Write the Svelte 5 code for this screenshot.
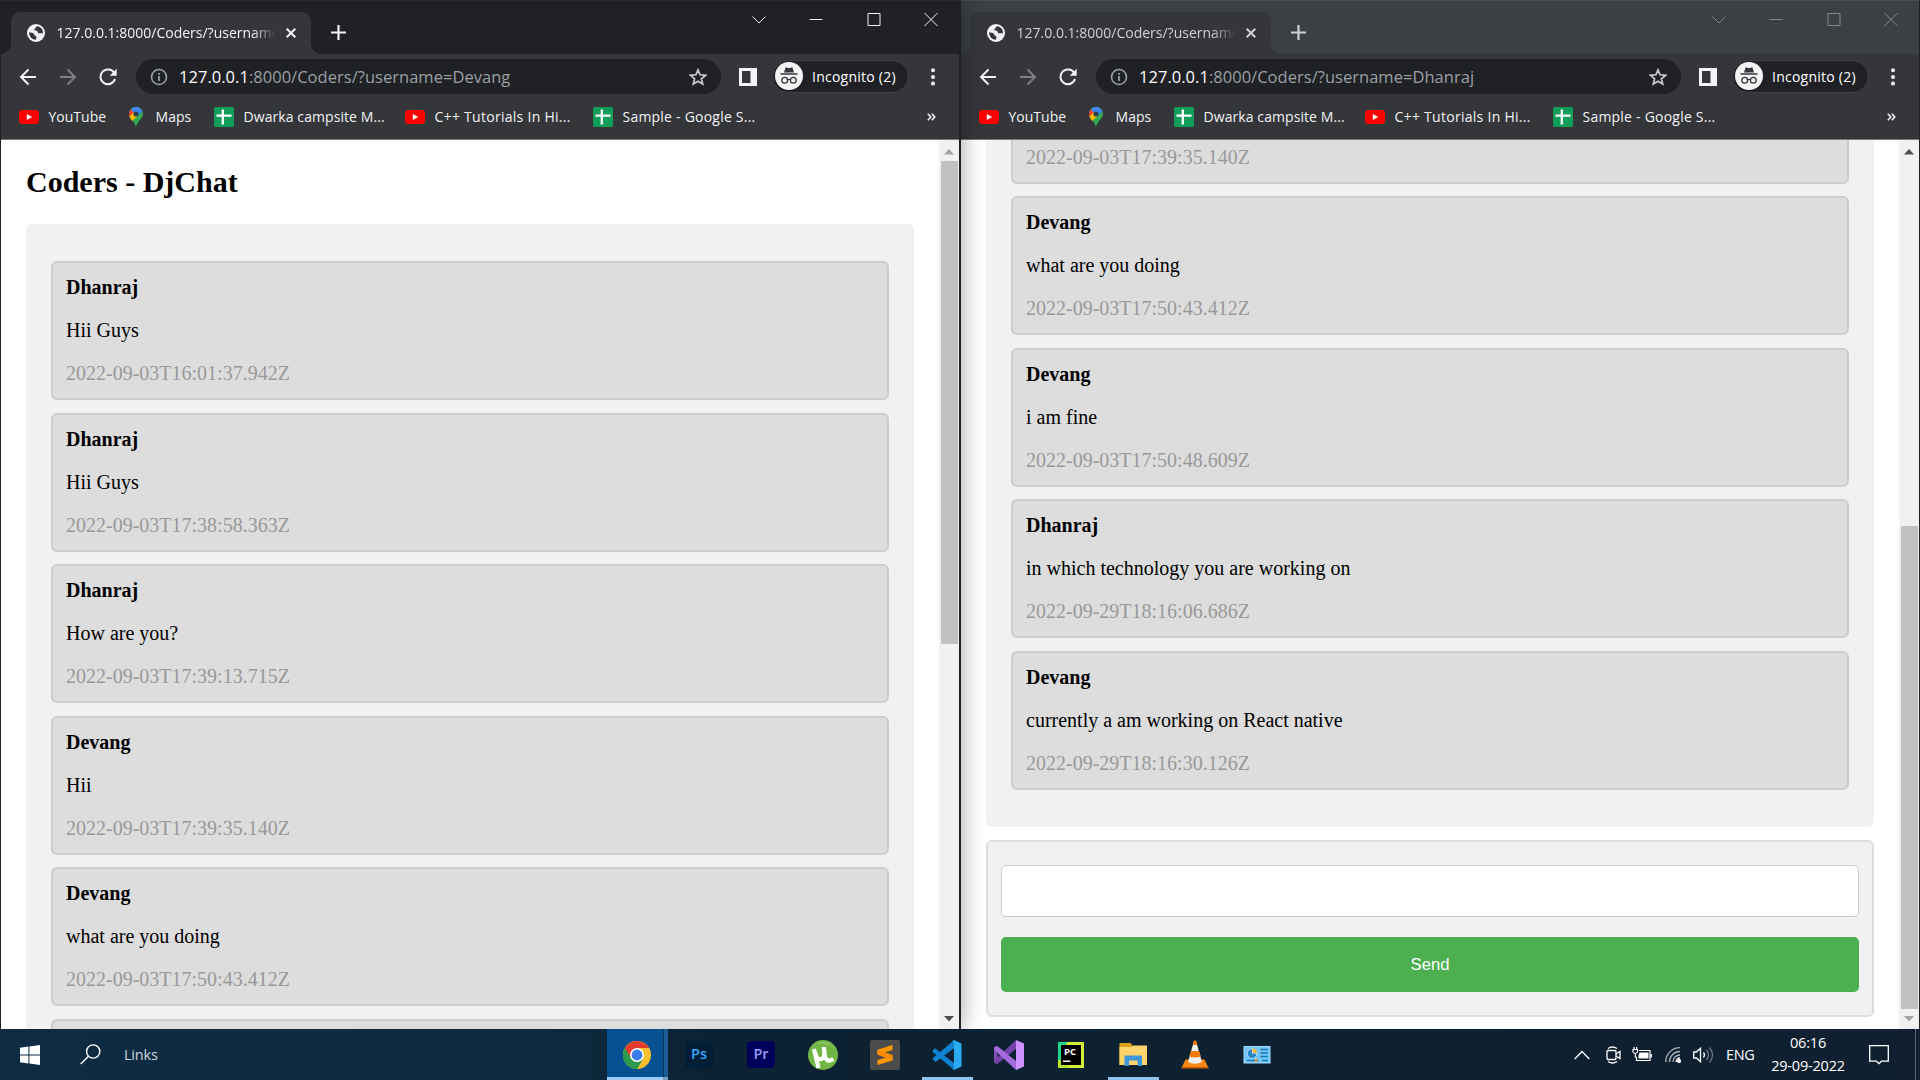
<script>
  const messages = [
    ['Dhanraj', 'Hii Guys', '2022-09-03T16:01:37.942Z'],
    ['Dhanraj', 'Hii Guys', '2022-09-03T17:38:58.363Z'],
    ['Dhanraj', 'How are you?', '2022-09-03T17:39:13.715Z'],
    ['Devang', 'Hii', '2022-09-03T17:39:35.140Z'],
    ['Devang', 'what are you doing', '2022-09-03T17:50:43.412Z'],
    ['Devang', 'i am fine', '2022-09-03T17:50:48.609Z'],
    ['Dhanraj', 'in which technology you are working on', '2022-09-29T18:16:06.686Z'],
    ['Devang', 'currently a am working on React native', '2022-09-29T18:16:30.126Z'],
  ];
  // icon, label, tracking in px
  const bookmarks = [
    ['yt', 'YouTube', 0],
    ['maps', 'Maps', 0.05],
    ['sheet', 'Dwarka campsite M...', 0.08],
    ['yt', 'C++ Tutorials In Hi...', 0.28],
    ['sheet', 'Sample - Google S...', 0.22],
  ];
  // The first window is scrolled to the top of the chat, the second to its end.
  const windows = [
    { user: 'Devang', active: true, visible: messages.slice(0, 6) },
    { user: 'Dhanraj', active: false, visible: messages.slice(3) },
  ];
  const apps = ['chrome', 'ps', 'pr', 'utorrent', 'sublime', 'vscode', 'vs', 'pycharm', 'folder', 'vlc', 'panel'];
  const running = ['vscode', 'folder'];
</script>

{#snippet bookmarkIcon(kind)}
  {#if kind === 'yt'}
    <svg width="20" height="20" viewBox="0 0 20 20"><rect y="3" width="20" height="14" rx="3.4" fill="#f00" /><path d="M7.8 7v6l5.4-3z" fill="#fff" /></svg>
  {:else if kind === 'maps'}
    <svg width="14" height="20" viewBox="0 0 14 20">
      <path d="M7 0a7 7 0 0 1 7 7c0 5-5.500 6.500-7 13-1.500-6.500-7-8-7-13a7 7 0 0 1 7-7z" fill="#34a853" />
      <path d="M1.600 2.500A7 7 0 0 1 13.500 4.500L7 9z" fill="#4285f4" />
      <path d="M1.700 2.400 5 5.500 1.500 11Q0 9 0 7c0-2 .7-3.400 1.700-4.600z" fill="#ea4335" />
      <path d="M9 8.500 3.300 14Q.8 11 .6 9.500L5 5z" fill="#fbbc04" />
      <circle cx="7" cy="7" r="2.500" fill="#303b58" />
    </svg>
  {:else}
    <svg width="20" height="20" viewBox="0 0 20 20"><rect width="20" height="20" rx="1.500" fill="#109d59" /><path d="M8.800 2.500v15M2.500 8.700h15" stroke="#fff" stroke-width="2.300" /></svg>
  {/if}
{/snippet}

{#snippet appIcon(name)}
  <svg width="30" height="30" viewBox="0 0 30 30">
    {#if name === 'chrome'}
      <circle cx="15" cy="15" r="14" fill="#fbc02d" />
      <path d="M15 15 2.900 8A14 14 0 0 0 15 29l6-10.500z" fill="#2b9b4b" />
      <path d="M15 15 2.900 8A14 14 0 0 1 27.100 8H15z" fill="#e33b2e" />
      <path d="M2.900 8 9 18.500 15 15 12 8z" fill="#e33b2e" />
      <path d="M2.900 8A14 14 0 0 0 15 29l5-8.500-11-2z" fill="#2b9b4b" />
      <circle cx="15" cy="15" r="7" fill="#fff" /><circle cx="15" cy="15" r="5.400" fill="#3b7ded" />
    {:else if name === 'ps'}
      <rect x="1" y="1" width="28" height="27" rx="4.500" fill="#001e36" /><text x="15" y="18.700" fill="#31a8ff">Ps</text>
    {:else if name === 'pr'}
      <rect x="1" y="1" width="28" height="27" rx="4.500" fill="#00005b" /><text x="15" y="18.700" fill="#9999ff">Pr</text>
    {:else if name === 'utorrent'}
      <circle cx="15" cy="15" r="15" fill="#71b544" />
      <path d="M2.500 7Q14-1 27 8 20 2 15 2T2.500 7z" fill="#9ccf73" />
      <path d="M6 9 10.500 28M7.500 13c1 8 8.500 9 9-1l-.8-5M16.500 14c1 7 4 8 9 5" fill="none" stroke="#fff" stroke-width="4.200" />
    {:else if name === 'sublime'}
      <rect width="30" height="30" rx="2" fill="#4b4b4b" />
      <path d="M7.500 9.700 22.500 5v5l-8.800 2.700 8.800 2.800v5L7.500 25v-5l8.800-2.600-8.800-2.900z" fill="#ff9800" /><path d="m7.500 9.700 15 5.300v5.300l-15-5.600z" fill="#f78c00" />
    {:else if name === 'vscode'}
      <path d="M.8 10.500 3 8.600l4.300 3.200L22 26v3.500L.8 12z" fill="#0a7dcb" />
      <path d="M22 .3v8L3.600 22 .8 19.800v-1.600z" fill="#0f83cf" />
      <path d="m22 0 7.500 3.500v23L22 30l-1.500-1 1.500-2V3l-1.500-2z" fill="#29aaf2" />
      <path d="M.8 10.500 3 8.600 22 23v6.700L.8 11.800z" fill="#0f83cf" />
    {:else if name === 'vs'}
      <path d="M0 7.500 3 6l7 5.500v7L3 24l-3-1.500z" fill="#8050b5" /><path d="M3.500 10.500v9L8 15z" fill="#0d2232" />
      <path d="M3 24 22 9V0L0 20.500v2z" fill="#7443a8" />
      <path d="m3 6 19 15v9L0 9.500v-2z" fill="#a56bdd" />
      <path d="m22 0 8 3.500v23L22 30z" fill="#cf91ff" />
    {:else if name === 'pycharm'}
      <path d="M2 2h26v26H2z" fill="#d6ed36" /><path d="M2 2h9L5 28H2z" fill="#20d789" /><path d="M2 20h10v8H2z" fill="#b8e62c" />
      <rect x="5" y="5" width="20" height="20" /><text x="14" y="15" fill="#fff" class="pc">PC</text><path d="M7 21.200h7.500" stroke="#fff" stroke-width="1.500" />
    {:else if name === 'folder'}
      <path d="M1.500 3h11l2.500 3h13.500v19h-27z" fill="#dba11d" /><path d="M1.500 7h12l2-1.500h13.500V25h-27.500z" fill="#ffd56b" />
      <path d="M6.500 26V15.500h17.500V26h-4.500v-5.500h-8.500V26z" fill="#3f97db" />
    {:else if name === 'vlc'}
      <path d="M5.500 19.500h19l4 8.500h-27z" fill="#f68712" /><path d="M14 1h2l6 21q-7 3.500-14 0z" fill="#eef0f0" />
      <path d="m13.500 2 .5-1.500h2L17.500 5h-5zM10.800 11h8.400l1.600 5.500q-5.800 2-11.600 0z" fill="#f27a0b" /><path d="M1.500 27h27v1.500h-27z" fill="#cf5c08" />
    {:else}
      <rect x="1.500" y="6" width="27" height="17.500" fill="#a4ddfa" /><rect x="2.500" y="7" width="25" height="15.500" fill="#73c5f4" />
      <circle cx="10" cy="13.500" r="5" fill="#eaf6fd" /><path d="M10 13.500v-4.500a4.500 4.500 0 1 0 4.500 4.500z" fill="#2a86c8" /><path d="M10.500 13V8.500A4.500 4.500 0 0 1 15 13z" fill="#f2b43f" />
      <path d="M18.500 9.500H26M18.500 13H26M18.500 16.500H26M5 20.500h11M20 20.500h6" stroke="#157ab8" stroke-width="1.300" /><path d="M14 19v3" stroke="#f39c1f" stroke-width="2" />
    {/if}
  </svg>
{/snippet}

<div class="desktop">
  <div class="screens">
    {#each windows as win}
      <section class="window" class:inactive={!win.active}>
        <header class="titlebar">
          <div class="tab">
            <svg width="18" height="18" viewBox="0 0 18 18"><circle cx="9" cy="9" r="9" fill="#f1f3f4" /><path d="M2 8.600c2.200 0 3.800.2 4.800 1.200.7.800.4 2 1.700 2.100 1 .1 1 .8.900 1.700l-.3 2.200A6.900 6.900 0 0 1 2 8.600zM10.700 2.300c-1 .3-2 .7-2 1.600 0 1-1.700.6-1.700 1.800 0 1 1.900.4 2.900 1 1.200.7.300 2.200 1.800 2.500 1.400.3 2.600-.3 4.200.2A6.900 6.900 0 0 0 10.700 2.300z" fill="#35363a" /></svg>
            <span class="tab-title">127.0.0.1:8000/Coders/?username</span>
            <svg class="tab-close" width="10" height="10" viewBox="0 0 10 10"><path d="m.7.7 8.600 8.600m0-8.600L.7 9.300" stroke="currentColor" stroke-width="2" /></svg>
          </div>
          <svg class="new-tab" width="15" height="15" viewBox="0 0 15 15"><path d="M7.500 0v15M0 7.500h15" stroke="currentColor" stroke-width="2.200" /></svg>
          <div class="controls">
            <svg width="14" height="14" viewBox="0 0 14 14"><path d="m.5 4.500 6.500 6.500L13.500 4.500" /></svg>
            <svg width="14" height="14" viewBox="0 0 14 14"><path d="M.5 7.500h13" /></svg>
            <svg width="14" height="14" viewBox="0 0 14 14"><path d="M1 1.500h12v12H1z" /></svg>
            <svg width="14" height="14" viewBox="0 0 14 14"><path d="m.5 1 13 13m0-13-13 13" /></svg>
          </div>
        </header>
        <div class="toolbar">
          <svg class="nav" width="18" height="18" viewBox="0 0 18 18"><path d="M17 9H2m7.500-7.500L2 9l7.500 7.500" stroke="#f1f3f4" /></svg>
          <svg class="nav" width="18" height="18" viewBox="0 0 18 18"><path d="M1 9h15M8.500 1.500 16 9l-7.500 7.500" stroke="#7d7e81" /></svg>
          <svg class="nav" width="19" height="18" viewBox="0 0 19 18"><path d="M15.500 5.400A7.400 7.400 0 1 0 16 11" stroke="#f1f3f4" /><path d="M17.700.7v7h-7z" fill="#f1f3f4" /></svg>
          <div class="omnibox">
            <svg width="18" height="18" viewBox="0 0 18 18" fill="none" stroke="#9aa0a6"><circle cx="9" cy="9" r="7.500" stroke-width="1.600" /><path d="M9 8v5M9 5v1.800" stroke-width="1.800" /></svg>
            <span class="url"><b>127.0.0.1</b>:8000/Coders/?username={win.user}</span>
            <svg class="star" width="18" height="18" viewBox="0 0 18 18"><path d="m9 1.800 2.100 5 5.400.5-4.100 3.500 1.300 5.300L9 13.300l-4.700 2.800 1.300-5.300-4.100-3.500 5.400-.5z" fill="none" stroke="#c9cbce" stroke-width="1.700" /></svg>
          </div>
          <svg class="side" width="18" height="18" viewBox="0 0 18 18"><path fill="#f1f3f4" fill-rule="evenodd" d="M0 0h18v18H0zM3 3v12h8.500V3z" /></svg>
          <div class="incognito">
            <svg width="28" height="28" viewBox="0 0 28 28"><circle cx="14" cy="14" r="14" fill="#f1f3f4" /><g fill="none" stroke="#35363a" stroke-width="1.300"><circle cx="9.700" cy="18.300" r="2.900" /><circle cx="18.300" cy="18.300" r="2.900" /><path d="M12.600 17.800q1.400-.8 2.800 0" /></g><path d="M5.500 11.300h17v1.500h-17zM9 10.500l1.600-5.200 3.400.9 3.400-.9 1.600 5.200z" fill="#35363a" /></svg>
            <span>Incognito (2)</span>
          </div>
          <svg class="dots" width="4" height="18" viewBox="0 0 4 18" fill="#f1f3f4"><circle cx="2" cy="2.200" r="2" /><circle cx="2" cy="9" r="2" /><circle cx="2" cy="15.500" r="2" /></svg>
        </div>
        <nav class="bookmarks">
          {#each bookmarks as [kind, label, tracking]}
            <span class="bookmark {kind}">{@render bookmarkIcon(kind)}<span class="label" style:letter-spacing="{tracking}px">{label}</span></span>
          {/each}
          <svg class="more" width="9" height="8" viewBox="0 0 9 8"><path d="m.8.8 3 3.200-3 3.200M4.800.8l3 3.200-3 3.200" fill="none" stroke="#f1f3f4" stroke-width="1.600" /></svg>
        </nav>
        <div class="viewport">
          <main class="page">
            {#if win.active}<h2>Coders - DjChat</h2>{/if}
            <div class="chat">
              {#each win.visible as [name, text, date]}
                <article class="message">
                  <b>{name}</b>
                  <p>{text}</p>
                  <time>{date}</time>
                </article>
              {/each}
            </div>
            {#if !win.active}
              <form class="composer">
                <input type="text" aria-label="Message" />
                <button type="button">Send</button>
              </form>
            {/if}
          </main>
          <div class="scrollbar">
            <svg class="up" width="10" height="6" viewBox="0 0 10 6"><path d="M5 0 10 5.500H0z" /></svg>
            <div class="track"><div class="thumb"></div></div>
            <svg class="down" width="10" height="6" viewBox="0 0 10 6"><path d="M5 5.500 10 0H0z" /></svg>
          </div>
        </div>
      </section>
    {/each}
  </div>
  <footer class="taskbar">
    <svg class="start" width="20" height="20" viewBox="0 0 20 20"><path fill="#fff" d="M0 2.800 8.400 1.600v7.800H0zM9.400 1.500 20 0v9.400H9.400zM0 10.400h8.400v8L0 17.200zM9.400 10.400H20V20L9.400 18.500z" /></svg>
    <svg class="search" width="21" height="21" viewBox="0 0 21 21"><circle cx="13.200" cy="7.500" r="6.600" /><path d="M8.500 12.200.7 20" /></svg>
    <span class="links">Links</span>
    <div class="apps">
      {#each apps as app}
        <div class="app" class:current={app === 'chrome'} class:running={running.includes(app)}>{@render appIcon(app)}</div>
      {/each}
    </div>
    <div class="tray">
      <svg width="16" height="10" viewBox="0 0 16 10"><path d="m.7 9 7.300-7.500L15.300 9" /></svg>
      <svg class="cam" width="15" height="18" viewBox="0 0 15 18"><rect x="1" y="4.500" width="9" height="9" rx="1" /><path d="m10 8 4-2.500v7L10 10M2 2.500q4.500-3 9 0M2 15.500q4.500 3 9 0" /></svg>
      <svg class="battery" width="20" height="16" viewBox="0 0 20 16"><path d="M7 3.500H18v10H4.500V10M19.300 7v3.500M1 2.500h4.500v2.500q-2.200 3-4.500 0zM2 0v2M4.700 0v2M3.300 7v3h1.200" stroke-width="1.200" /><path d="M7.500 5.500h9v6H6.500V8z" fill="#fff" stroke="none" /></svg>
      <svg class="wifi" width="16" height="16" viewBox="0 0 16 16"><path d="M.7 15A14.300 14.300 0 0 1 15 .7M4.500 15A10.500 10.500 0 0 1 15 4.500M8 15a7 7 0 0 1 7-7" opacity=".65" /><path d="M11 15a4 4 0 0 1 4-4" /><circle cx="14" cy="14" r="1.400" fill="#fff" /></svg>
      <svg class="volume" width="21" height="18" viewBox="0 0 21 18"><path d="M.7 6h2.800L7.500 2.300v13.400L3.500 12H.7z" /><path d="M10.500 6.500q2 2.500 0 5" /><path d="M13.500 4q4 5 0 10M16.500 1.500q6 7.500 0 15" opacity=".4" /></svg>
      <span class="lang">ENG</span>
      <div class="clock"><span>06:16</span><span>29-09-2022</span></div>
      <svg class="note" width="20" height="20" viewBox="0 0 20 20"><path d="M.7.700h18.600v15.500h-6.800L10 18.700l-2.500-2.500H.7z" /></svg>
      <i class="peek"></i>
    </div>
  </footer>
</div>

<style>
  :global(body) { overflow: hidden; }
  svg { display: block; flex: none; }
  .desktop { width: 1920px; height: 1080px; display: flex; flex-direction: column; font-family: "Open Sans", "Noto Sans", sans-serif; }
  .screens { display: flex; height: 1029px; }
  .window { width: 960px; height: 1029px; box-sizing: border-box; display: flex; flex-direction: column; border: solid #202124; border-width: 0 1px; background: #35363a; position: relative; z-index: 1; box-shadow: 1px 0 0 #202124, 3px 0 20px rgba(0, 0, 0, .32); }
  .window.inactive { z-index: 0; box-shadow: none; }
  .titlebar { height: 54px; box-sizing: border-box; background: #202124; display: flex; align-items: flex-start; padding: 11px 21px 0 10px; border-top: 1px solid #292c2f; color: #f1f3f4; }
  .inactive .titlebar { background: #3c4043; border-top-color: #4b4f52; color: #cfd1d3; }
  .tab { width: 300px; height: 42px; box-sizing: border-box; background: #35363a; border-radius: 9px 9px 0 0; display: flex; align-items: center; padding: 0 15px 0 16px; position: relative; }
  .tab::before, .tab::after { content: ""; position: absolute; bottom: 0; width: 10px; height: 10px; }
  .tab::before { left: -10px; background: radial-gradient(circle at 0 0, transparent 9.500px, #35363a 10px); }
  .tab::after { right: -10px; background: radial-gradient(circle at 100% 0, transparent 9.500px, #35363a 10px); }
  .tab-title { margin-left: 11.500px; width: 219px; overflow: hidden; white-space: nowrap; font-size: 14px; letter-spacing: 0; line-height: 20px; mask-image: linear-gradient(90deg, #000 195px, transparent 219px); }
  .tab-close { margin-left: auto; }
  .new-tab { margin: 13px 0 0 20px; }
  .controls { margin-left: auto; display: flex; gap: 43.300px; fill: none; stroke: currentColor; stroke-width: 1; }
  .inactive .controls { color: #85888a; }
  .toolbar { height: 45px; display: flex; align-items: center; padding: 0 24px 0 18px; flex: none; }
  .nav { margin-right: 22px; fill: none; stroke-width: 2; }
  .omnibox { width: 585px; height: 35px; border-radius: 18px; background: #202124; display: flex; align-items: center; padding: 0 14px; box-sizing: border-box; margin-left: -4px; }
  .url { color: #9aa0a6; margin-left: 11px; font-size: 16.500px; letter-spacing: .03px; white-space: nowrap; }
  .url b { font-weight: 400; color: #fff; }
  .star { margin-left: auto; }
  .side { margin-left: 18px; }
  .incognito { margin-left: 15px; width: 137px; height: 33px; box-sizing: border-box; border: 1px solid #3f4145; border-radius: 17px; background: #202124; display: flex; align-items: center; gap: 9px; padding: 0 0 1px 2px; color: #fff; font-size: 14px; white-space: nowrap; letter-spacing: .24px; }
  .dots { margin-left: auto; }
  .bookmarks { height: 41px; box-sizing: border-box; border-bottom: 1px solid #77787b; display: grid; grid-template-columns: 110px 84px 192px 187px 1fr auto; align-items: center; padding: 0 23px 4px 18px; color: #f1f3f4; font-size: 14px; flex: none; }
  .bookmark { display: flex; align-items: center; gap: 10px; white-space: nowrap; }
  .bookmark.maps { gap: 13px; }
  .bookmark.sheet { padding-left: 1px; }
  .label { margin-top: -2px; margin-left: -.5px; }
  .viewport { height: 889px; display: flex; background: #fff; overflow: hidden; }
  .page { width: 938px; height: 889px; overflow: hidden; box-sizing: border-box; padding: 0 25px; font-family: "Liberation Serif", serif; font-size: 20px; line-height: 23px; color: #000; display: flex; flex-direction: column; }
  .inactive .page { justify-content: flex-end; padding-bottom: 12.250px; }
  h2 { font-size: 30px; line-height: 34px; margin: 25px 0 24.750px; flex: none; }
  .chat { background: #f1f1f1; border-radius: 6px; padding: 37.500px 25px; display: flex; flex-direction: column; gap: 12.500px; flex: none; }
  .message { height: 139px; flex: none; box-sizing: border-box; border: 2px solid #ccc; border-radius: 6px; background: #ddd; padding: 13.200px 13px 0; display: flex; flex-direction: column; gap: 20px; }
  .message p { margin: 0; }
  .message time { color: #999; }
  .composer { margin: 12.500px 0 0; height: 177px; box-sizing: border-box; border: 2px solid #ddd; border-radius: 6px; background: #f1f1f1; padding: 23px 13px; display: flex; flex-direction: column; gap: 20px; flex: none; }
  input { height: 52px; box-sizing: border-box; border: 1px solid #ccc; border-radius: 5px; background: #fff; padding: 12px; }
  button { height: 55px; border: 0; border-radius: 5px; background: #4caf50; color: #fff; font: 16.670px "Liberation Sans", sans-serif; padding: 2px 6px 0; }
  .scrollbar { width: 20px; background: #f1f1f1; display: flex; flex-direction: column; align-items: center; }
  .up { margin: 9px 0 6px; fill: #a3a3a3; }
  .down { margin: 7px 0 7px; fill: #505050; }
  .inactive .up { fill: #505050; }
  .inactive .down { fill: #a3a3a3; }
  .track { flex: 1; display: flex; flex-direction: column; }
  .thumb { width: 17px; height: 483px; background: #c1c1c1; }
  .inactive .track { justify-content: flex-end; }
  .taskbar { height: 51px; display: flex; align-items: center; background: linear-gradient(90deg, #0d2b43, #0e2a40 28%, #0c2131 38%, #0d2131 70%, #102030); color: #fff; position: relative; z-index: 2; }
  .start { margin-left: 20px; }
  .search { margin-left: 40px; fill: none; stroke: #fff; stroke-width: 1.400; }
  .links { margin-left: 23px; width: 483px; color: #ccd3d9; font-size: 14.500px; letter-spacing: -.2px; }
  .apps { display: flex; height: 51px; }
  .app { width: 62px; height: 51px; display: flex; justify-content: center; align-items: center; position: relative; box-sizing: border-box; padding-right: 2px; }
  .app.current { background: linear-gradient(90deg, #075092 56px, #12365a 56px, #12365a 57px, #1d5c91 57px, #1d5c91 61px, transparent 61px); padding-right: 3px; }
  .app.current::after, .running::after { content: ""; position: absolute; bottom: 0; left: 5px; width: 51px; height: 3px; background: #8fc4ee; }
  .app.current::after { left: 0; width: 61px; background: linear-gradient(90deg, #9bcdf4 56px, #6f9fc6 56px); }
  .app text { font: 600 14.500px "Open Sans", sans-serif; text-anchor: middle; }
  .app text.pc { font-size: 9.500px; font-weight: 700; }
  .tray { margin-left: auto; height: 51px; display: flex; align-items: center; fill: none; stroke: #fff; stroke-width: 1.300; }
  .tray span { stroke: none; }
  .cam { margin-left: 16px; }
  .battery { margin-left: 11px; }
  .wifi { margin-left: 13px; }
  .volume { margin-left: 12px; }
  .lang { margin-left: 12px; width: 28px; font-size: 14.500px; letter-spacing: -.4px; }
  .clock { width: 76px; margin-left: 16px; display: flex; flex-direction: column; align-items: center; font-size: 14.500px; line-height: 23px; letter-spacing: -.2px; white-space: nowrap; padding-bottom: 1px; }
  .note { margin-left: 23px; }
  .peek { width: 1px; height: 51px; margin: 0 4px 0 26px; background: #586675; }
</style>
